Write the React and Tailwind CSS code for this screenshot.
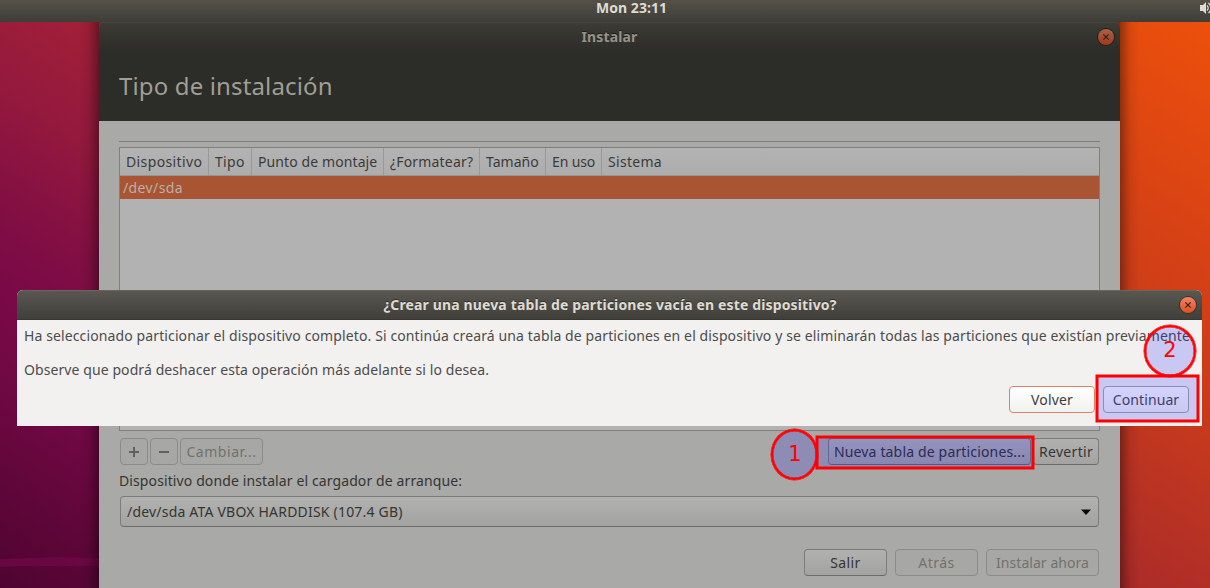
function CloseButton({ dim }) {
  return (
    <button
      className={
        dim
          ? 'flex size-4 items-center justify-center rounded-full bg-linear-to-b from-[#aa5f47] to-[#a03a14] shadow-[0_0_0_1px_#211f1c]'
          : 'flex size-4 items-center justify-center rounded-full bg-linear-to-b from-[#f18263] to-[#de4f1c] shadow-[0_0_0_1px_#35332e]'
      }
      aria-label="Cerrar"
    >
      <svg viewBox="0 0 16 16" className="size-4" fill="none" stroke="#33231a" strokeWidth="1.2">
        <path d="M5.300 5.300l5.400 5.400M10.700 5.300l-5.400 5.400" />
      </svg>
    </button>
  );
}

const columns = [
  { label: 'Dispositivo', cls: 'w-[89px] tracking-[0.38px]' },
  { label: 'Tipo', cls: 'w-[43px] tracking-[0.3px]' },
  { label: 'Punto de montaje', cls: 'w-[132px] tracking-[0.1px]' },
  { label: '¿Formatear?', cls: 'w-[96px] tracking-[0.18px]' },
  { label: 'Tamaño', cls: 'w-[66px] tracking-[0.02px]' },
  { label: 'En uso', cls: 'w-[56px] tracking-[-0.15px]' },
];

const button =
  'flex h-[27px] shrink-0 items-center justify-center rounded-[4px] border whitespace-nowrap';
const active =
  'border-[#7c7c79] border-b-[#6c6c69] bg-linear-to-b from-[#b1b1b0] to-[#a3a3a2] text-[#353532]';
const disabled = 'border-[#8b8b88] bg-[#a7a7a5] text-[#72726d]';

function InstallerWindow() {
  return (
    <main className="flex w-[1021px] shrink-0 flex-col overflow-hidden rounded-t-[6px] bg-[#a9a9a7] text-[14px] text-[#353532]">
      <header className="flex h-[99px] shrink-0 flex-col bg-[#2c2c28]">
        <div className="grid h-[30px] grid-cols-[1fr_auto_1fr] items-center border-t border-[#44433d] bg-linear-to-b from-[#3c3b36] to-[#2c2c28] pr-[6px] pb-[2px]">
          <span />
          <span className="pl-[6px] font-bold tracking-[0.143px] text-[#979389] [text-shadow:0_-1px_#1e1d1a]">
            Instalar
          </span>
          <div className="flex justify-end">
            <CloseButton dim />
          </div>
        </div>
        <h1 className="pl-5 text-[24px] leading-[68px] tracking-[0.14px] text-[#a09e95]">
          Tipo de instalación
        </h1>
      </header>

      <div className="flex flex-col px-5 pt-5">
        <div className="h-px bg-[#7d7d7a]" />
        <section className="mt-[5px] flex h-[284px] flex-col border border-[#7f7f7c] bg-[#b2b2b2]">
          <div className="flex h-7 shrink-0 border-b border-[#959593] bg-linear-to-b from-[#b3b3b3] to-[#adadad]">
            {columns.map((c) => (
              <div
                key={c.label}
                className={`flex shrink-0 items-center border-r border-[#999997] pl-[6px] whitespace-nowrap text-[#3b3b39] ${c.cls}`}
              >
                {c.label}
              </div>
            ))}
            <div className="flex items-center pl-[6px] tracking-[0.299px] text-[#3b3b39]">Sistema</div>
          </div>
          <div className="flex h-[23px] shrink-0 items-center bg-[#a95432] pl-[3px] tracking-[0.383px] text-[#b9b0ab]">
            /dev/sda
          </div>
        </section>

        <div className="mt-[7px] flex gap-[2px] pr-px pl-px">
          <button className={`${button} ${disabled} w-7`} aria-label="Añadir">
            <svg viewBox="0 0 10 10" className="size-[10px]" stroke="#62625c" strokeWidth="2">
              <path d="M0 5h10M5 0v10" />
            </svg>
          </button>
          <button className={`${button} ${disabled} w-7`} aria-label="Quitar">
            <svg viewBox="0 0 10 10" className="size-[10px]" stroke="#62625c" strokeWidth="2">
              <path d="M0 5h10" />
            </svg>
          </button>
          <button className={`${button} ${disabled} w-[83px] tracking-[0.55px]`}>Cambiar...</button>
          <button className={`${button} ${active} ml-auto w-[203px] tracking-[0.16px]`}>
            Nueva tabla de particiones...
          </button>
          <button className={`${button} ${active} w-[66px] tracking-[0.3px]`}>Revertir</button>
        </div>

        <label className="mt-[5px] leading-[22px] tracking-[0.11px]">
          Dispositivo donde instalar el cargador de arranque:
        </label>
        <div className="mx-px mt-1 flex h-[31px] items-center justify-between rounded-[4px] border border-[#7c7c79] border-b-[#6c6c69] bg-linear-to-b from-[#b1b1b0] to-[#a3a3a2] pr-[7px] pl-[6px]">
          <span className="tracking-[0.2px]">/dev/sda ATA VBOX HARDDISK (107.4 GB)</span>
          <svg viewBox="0 0 10 6" className="h-[6px] w-[10px]" fill="#0a0a0a">
            <path d="M0 .5h10L5 6z" />
          </svg>
        </div>

        <div className="mt-[22px] flex justify-end gap-2 pr-px">
          <button className={`${button} ${active} w-[83px] tracking-[0.4px]`}>Salir</button>
          <button className={`${button} ${disabled} w-[83px] tracking-[0.5px]`}>Atrás</button>
          <button className={`${button} ${disabled} w-[113px] tracking-[0.05px]`}>Instalar ahora</button>
        </div>
      </div>
    </main>
  );
}

function ConfirmDialog() {
  return (
    <div
      role="dialog"
      className="absolute top-[290px] left-[17px] flex h-[136px] w-[1185px] flex-col overflow-hidden rounded-t-[6px] bg-[#f2f1f0] text-[14px] text-[#4c4c4c]"
    >
      <div className="grid h-[30px] shrink-0 grid-cols-[1fr_auto_1fr] items-center border-t border-b border-t-[#68665c] border-b-[#383630] bg-linear-to-b from-[#595750] to-[#403f3a] pr-[6px]">
        <span />
        <span className="pb-[2px] pl-[7px] font-bold tracking-[0.138px] whitespace-nowrap text-[#dfdbd2] [text-shadow:0_-1px_#33322d]">
          ¿Crear una nueva tabla de particiones vacía en este dispositivo?
        </span>
        <div className="flex justify-end">
          <CloseButton />
        </div>
      </div>
      <div className="flex flex-col gap-[17px] pt-[7px] pl-[7px] leading-[17px] whitespace-nowrap">
        <p className="tracking-[0.115px]">
          Ha seleccionado particionar el dispositivo completo. Si continúa creará una tabla de particiones en el
          dispositivo y se eliminarán todas las particiones que existían previamente.
        </p>
        <p className="tracking-[0.087px]">Observe que podrá deshacer esta operación más adelante si lo desea.</p>
      </div>
      <div className="mt-2 flex justify-end gap-2 pr-[13px]">
        <button
          className={`${button} w-[86px] border-[#dc8565] bg-linear-to-b from-white to-[#f1f1f0] tracking-[0.167px] text-[#3c3c3c]`}
        >
          Volver
        </button>
        <button
          className={`${button} w-[86px] border-[#aaa8a8] bg-linear-to-b from-white to-[#f1f1f0] tracking-[0.1px] text-[#4c4c4c]`}
        >
          Continuar
        </button>
      </div>
    </div>
  );
}

const mark = 'absolute bg-[#0000ff]/17 pointer-events-none';
const frame = 'border-2 border-[#fe0000] shadow-[0_0_0_0.5px_#fe0000,inset_0_0_0_0.5px_#fe0000]';

function Annotations() {
  return (
    <>
      <div className={`${mark} ${frame} top-[436px] left-[816px] h-[33px] w-[218px]`} />
      <div
        className={`${mark} ${frame} top-[429px] left-[771px] flex h-[51px] w-[47px] items-center justify-center rounded-[50%] pl-px font-['DejaVu_Sans',sans-serif] text-[21px] text-[#fe0000]`}
      >
        1
      </div>
      <div className={`${mark} ${frame} top-[375px] left-[1096px] h-[47px] w-[103px]`} />
      <div
        className={`${mark} ${frame} top-[325px] left-[1144px] flex h-[52px] w-[52px] items-center justify-center rounded-[50%] font-['DejaVu_Sans',sans-serif] text-[21px] text-[#fe0000]`}
      >
        2
      </div>
    </>
  );
}

export default function App() {
  return (
    <div className="relative flex h-[588px] w-[1210px] flex-col overflow-hidden bg-[#8c173e] font-['Noto_Sans',sans-serif]">
      <div className="grid h-[22px] shrink-0 grid-cols-[1fr_auto_1fr] items-center bg-linear-to-b from-[#555149] to-[#3e3d38] pb-[6px]">
        <span />
        <span className="pl-[53px] text-[14px] leading-4 font-bold tracking-[0.036px] text-[#dfdbd2]">
          Mon 23:11
        </span>
        <svg viewBox="0 0 10 12" className="h-3 w-[10px] justify-self-end" fill="#dfdbd2">
          <path d="M0 3h3l3-3v12L3 9H0z" />
          <path d="M7 3.500c1.600 1.500 1.600 3.500 0 5M8.500 1c3 3 3 7 0 10" fill="none" stroke="#dfdbd2" strokeWidth="1.200" />
        </svg>
      </div>
      <div className="flex min-h-0 flex-1">
        <div className="flex w-[99px] shrink-0 flex-col justify-end bg-[linear-gradient(213deg,#a32037_0%,#94193d_20%,#830f43_38%,#790a47_52%,#6f0843_68%,#5e0639_84%,#4f0430_100%)]">
          <svg viewBox="0 0 99 12" className="mb-[19px] h-3 w-[99px]" fill="#6e0747" fillOpacity="0.8">
            <path d="M0 2L60 0l39 1v8L20 9 0 10z" />
          </svg>
        </div>
        <InstallerWindow />
        <div className="flex-1 bg-[linear-gradient(213deg,#ed500c_0%,#d94314_34%,#c5391d_66%,#ab2b2a_100%)]" />
      </div>
      <div className="pointer-events-none absolute top-[22px] left-[79px] flex h-[566px] w-[1061px] justify-between">
        <div className="w-5 bg-linear-to-r from-transparent via-black/8 to-black/35" />
        <div className="w-5 bg-linear-to-l from-transparent via-black/8 to-black/35" />
      </div>
      <ConfirmDialog />
      <Annotations />
    </div>
  );
}
